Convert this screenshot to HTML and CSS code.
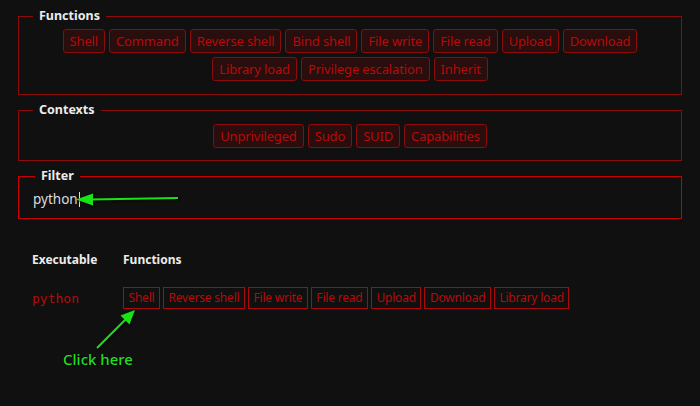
FILE: index.html
```html
<!DOCTYPE html>
<html lang="en">
<head>
<meta charset="utf-8">
<title>GTFOBins</title>
<link rel="stylesheet" href="styles.css">
</head>
<body>
<main class="page">
  <fieldset class="group">
    <legend>Functions</legend>
    <div class="chips">
      <span class="chip">Shell</span>
      <span class="chip">Command</span>
      <span class="chip">Reverse shell</span>
      <span class="chip">Bind shell</span>
      <span class="chip">File write</span>
      <span class="chip">File read</span>
      <span class="chip">Upload</span>
      <span class="chip">Download</span>
      <span class="chip">Library load</span>
      <span class="chip">Privilege escalation</span>
      <span class="chip">Inherit</span>
    </div>
  </fieldset>

  <fieldset class="group group-contexts">
    <legend>Contexts</legend>
    <div class="chips">
      <span class="chip">Unprivileged</span>
      <span class="chip">Sudo</span>
      <span class="chip">SUID</span>
      <span class="chip">Capabilities</span>
    </div>
  </fieldset>

  <fieldset class="group group-focus">
    <legend>Filter</legend>
    <div class="filter"><span class="filter-text">python</span><span class="caret"></span></div>
  </fieldset>

  <section class="results">
    <div class="head">Executable</div>
    <div class="head">Functions</div>
    <div class="bin">python</div>
    <div class="links">
      <span class="link">Shell</span>
      <span class="link">Reverse shell</span>
      <span class="link">File write</span>
      <span class="link">File read</span>
      <span class="link">Upload</span>
      <span class="link">Download</span>
      <span class="link">Library load</span>
    </div>
  </section>
</main>

<svg class="notes" width="700" height="406" viewBox="0 0 700 406" aria-hidden="true">
  <g class="arrow">
    <line x1="178" y1="198" x2="90" y2="199.5"/>
    <polygon points="76,199.5 93,193.5 93,205.5"/>
  </g>
  <g class="arrow">
    <line x1="97" y1="348" x2="126" y2="319"/>
    <polygon points="135,310 129.5,324.5 120.5,315.5"/>
  </g>
</svg>
<div class="note">Click here</div>
</body>
</html>
```

FILE: styles.css
```css
html, body {
  margin: 0;
  background: #101010;
}

body {
  position: relative;
  width: 700px;
  height: 406px;
  overflow: hidden;
  font-family: "Noto Sans", "Open Sans", sans-serif;
  color: #e8e8e8;
}

.page {
  padding: 8px 18px 0 18px;
}

.group {
  margin: 0 0 7px;
  padding: 5px 12px 13px;
  border: 1px solid #8e0b0b;
}

.group-contexts {
  padding: 6px 12px 12px;
}

.group-focus {
  border-color: #c90000;
  padding: 5px 14px 9px;
}

.group legend {
  margin-left: 2px;
  padding: 0 6px;
  font-size: 12.5px;
  font-weight: 700;
  line-height: 16px;
  color: #ececec;
}

.chips {
  display: flex;
  flex-wrap: wrap;
  justify-content: center;
  gap: 4px 4px;
}

.chip {
  display: inline-block;
  padding: 2px 6px;
  font-size: 13px;
  line-height: 18px;
  letter-spacing: -0.15px;
  color: #b50b0b;
  background: #2a0d0d;
  border: 1px solid #8e0b0b;
  border-radius: 3px;
}

.filter {
  display: flex;
  align-items: center;
  height: 20px;
  font-size: 13.5px;
  color: #dcdcdc;
}

.caret {
  display: inline-block;
  width: 1px;
  height: 15px;
  margin-left: 1px;
  background: #dcdcdc;
}

.results {
  display: grid;
  grid-template-columns: 91px auto;
  grid-template-rows: 22px 22px;
  row-gap: 17px;
  align-items: center;
  margin: 29px 0 0 14px;
}

.head {
  font-size: 12px;
  font-weight: 700;
  color: #ececec;
}

.bin {
  font-family: "DejaVu Sans Mono", monospace;
  font-size: 13px;
  color: #b50b0b;
}

.links {
  display: flex;
  gap: 3px;
}

.link {
  padding: 1px 4.5px;
  font-size: 12px;
  line-height: 18px;
  letter-spacing: -0.2px;
  color: #b50b0b;
  border: 1px solid #a80a0a;
}

.notes {
  position: absolute;
  left: 0;
  top: 0;
  pointer-events: none;
  filter: drop-shadow(1px 1px 1px rgba(0, 0, 0, 0.9));
}

.arrow line {
  stroke: #16e416;
  stroke-width: 2;
}

.arrow polygon {
  fill: #16e416;
}

.note {
  position: absolute;
  left: 63px;
  top: 349px;
  font-size: 15px;
  font-weight: 500;
  color: #22dd22;
  text-shadow: 1px 1px 1px #000;
}
```
